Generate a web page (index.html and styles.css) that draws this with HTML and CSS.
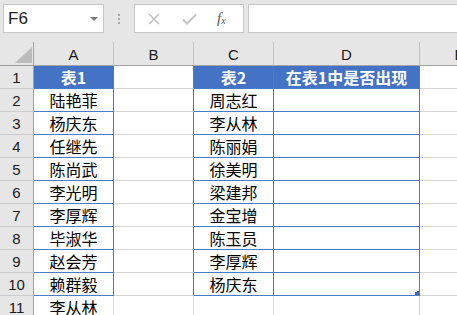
FILE: index.html
```html
<!DOCTYPE html>
<html lang="zh-CN">
<head>
<meta charset="utf-8">
<title>Sheet</title>
<link rel="stylesheet" href="styles.css">
</head>
<body>
<div class="toolbar">
  <div class="namebox"><span class="nb-text">F6</span><span class="nb-arrow"></span></div>
  <div class="dots"><i></i><i></i><i></i></div>
  <div class="fxbox">
    <svg class="ico-x" width="12" height="12" viewBox="0 0 12 12"><path d="M1 1 L11 11 M11 1 L1 11" stroke="#c3c3c3" stroke-width="1.6" fill="none"/></svg>
    <svg class="ico-v" width="15" height="12" viewBox="0 0 15 12"><path d="M1 6.5 L5 10.5 L14 1.5" stroke="#c3c3c3" stroke-width="2" fill="none"/></svg>
    <span class="fx">f<sub>x</sub></span>
  </div>
  <div class="input"></div>
</div>
<div class="sheet">
  <div class="ch corner"><svg width="17" height="16" viewBox="0 0 17 16"><path d="M17 0 L17 16 L0 16 Z" fill="#bcbcbc"/></svg></div>
  <div class="ch">A</div><div class="ch">B</div><div class="ch">C</div><div class="ch">D</div><div class="ch">E</div>

  <div class="rh">1</div><div class="c t hd">表1</div><div class="c bl"></div><div class="c t hd">表2</div><div class="c t hd">在表1中是否出现</div><div class="c"></div>
  <div class="rh">2</div><div class="c t">陆艳菲</div><div class="c bl"></div><div class="c t">周志红</div><div class="c t"></div><div class="c"></div>
  <div class="rh">3</div><div class="c t">杨庆东</div><div class="c bl"></div><div class="c t">李从林</div><div class="c t"></div><div class="c"></div>
  <div class="rh">4</div><div class="c t">任继先</div><div class="c bl"></div><div class="c t">陈丽娟</div><div class="c t"></div><div class="c"></div>
  <div class="rh">5</div><div class="c t">陈尚武</div><div class="c bl"></div><div class="c t">徐美明</div><div class="c t"></div><div class="c"></div>
  <div class="rh">6</div><div class="c t">李光明</div><div class="c bl"></div><div class="c t">梁建邦</div><div class="c t"></div><div class="c"></div>
  <div class="rh">7</div><div class="c t">李厚辉</div><div class="c bl"></div><div class="c t">金宝增</div><div class="c t"></div><div class="c"></div>
  <div class="rh">8</div><div class="c t">毕淑华</div><div class="c bl"></div><div class="c t">陈玉员</div><div class="c t"></div><div class="c"></div>
  <div class="rh">9</div><div class="c t">赵会芳</div><div class="c bl"></div><div class="c t">李厚辉</div><div class="c t"></div><div class="c"></div>
  <div class="rh">10</div><div class="c t">赖群毅</div><div class="c bl"></div><div class="c t">杨庆东</div><div class="c t last"><span class="handle"></span></div><div class="c"></div>
  <div class="rh">11</div><div class="c">李从林</div><div class="c"></div><div class="c"></div><div class="c"></div><div class="c"></div>
</div>
</body>
</html>
```

FILE: styles.css
```css
html, body {
  margin: 0;
  padding: 0;
  background: #e6e6e6;
  overflow: hidden;
}
body {
  width: 457px;
  height: 315px;
  font-family: "Liberation Sans", Arial, sans-serif;
}
.toolbar {
  display: flex;
  align-items: flex-start;
  height: 42px;
  box-sizing: border-box;
  padding: 4px 0 0 3px;
  background: #e6e6e6;
}
.namebox {
  width: 101px;
  height: 29px;
  box-sizing: border-box;
  border: 1px solid #c6c6c6;
  background: #fff;
  display: flex;
  align-items: center;
  padding-left: 4px;
  font-size: 17px;
  color: #222;
}
.nb-arrow {
  margin-left: auto;
  margin-right: 5px;
  width: 0;
  height: 0;
  border-left: 4px solid transparent;
  border-right: 4px solid transparent;
  border-top: 4px solid #7a7a7a;
}
.dots {
  width: 30px;
  display: flex;
  flex-direction: column;
  align-items: center;
  gap: 2px;
  padding-top: 10px;
}
.dots i {
  display: block;
  width: 2px;
  height: 2px;
  background: #a8a8a8;
}
.fxbox {
  width: 110px;
  height: 29px;
  box-sizing: border-box;
  border: 1px solid #c6c6c6;
  background: #fff;
  display: flex;
  align-items: center;
  padding-left: 13px;
}
.ico-x { margin-right: 22px; }
.ico-v { margin-right: 20px; }
.fx {
  font-family: "Liberation Serif", serif;
  font-style: italic;
  font-size: 15px;
  color: #555;
  line-height: 1;
}
.fx sub {
  font-size: 10px;
  vertical-align: -1px;
}
.input {
  flex: 1;
  height: 29px;
  margin-left: 4px;
  margin-right: -10px;
  box-sizing: border-box;
  border: 1px solid #c6c6c6;
  background: #fff;
}
.sheet {
  display: grid;
  grid-template-columns: 34px 80px 80px 80px 146px 80px;
  grid-template-rows: 24px;
  grid-auto-rows: 23px;
  width: 500px;
}
.sheet > div {
  box-sizing: border-box;
  display: flex;
  align-items: center;
  justify-content: center;
}
.ch {
  background: #e6e6e6;
  border-right: 1px solid #c2c2c2;
  border-bottom: 1px solid #a3a3a3;
  font-size: 15px;
  color: #1a1a1a;
  padding-top: 1px;
}
.corner {
  justify-content: flex-end !important;
  align-items: flex-end !important;
  padding: 0 1px 2px 0;
  border-right-color: #a3a3a3;
}
.corner svg { display: block; }
.rh {
  background: #e6e6e6;
  border-right: 1px solid #a3a3a3;
  border-bottom: 1px solid #cdcdcd;
  font-size: 15px;
  color: #1a1a1a;
}
.c {
  background: #fff;
  border-right: 1px solid #d4d4d4;
  border-bottom: 1px solid #d4d4d4;
  font-family: "Noto Sans CJK SC", sans-serif;
  font-size: 16px;
  color: #000;
  position: relative;
}
.c.t {
  border-right-color: #4a7bc8;
  border-bottom-color: #4a7bc8;
}
.c.bl {
  border-right-color: #4a7bc8;
}
.c.hd {
  background: #4472c4;
  color: #fff;
  font-weight: bold;
}
.handle {
  position: absolute;
  right: 0;
  bottom: 0;
  width: 4px;
  height: 4px;
  background: #3f66b0;
  clip-path: polygon(50% 0, 100% 0, 100% 100%, 0 100%, 0 25%, 50% 25%);
}
```
